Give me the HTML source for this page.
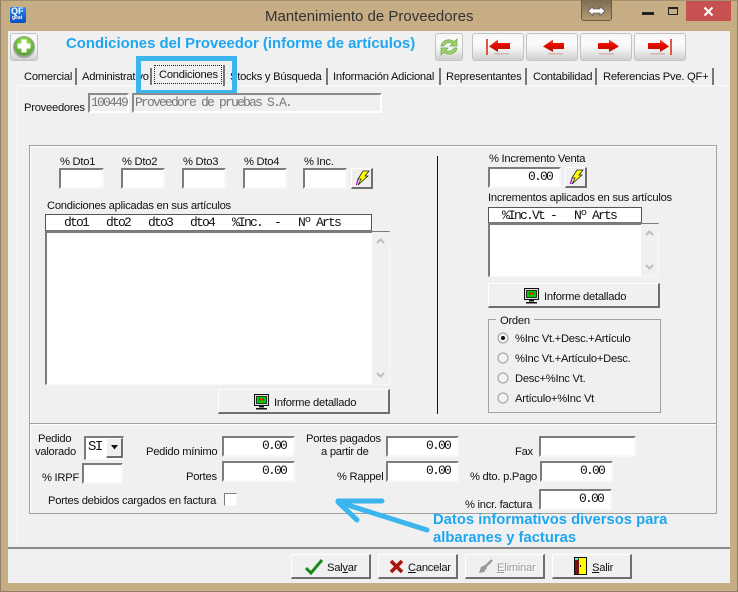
<!DOCTYPE html>
<html><head><meta charset="utf-8"><style>
html,body{margin:0;padding:0}
body{width:738px;height:592px;overflow:hidden;position:relative;background:#c7ad84;font-family:"Liberation Sans",sans-serif;font-size:11.2px;letter-spacing:-.25px;color:#111}
div,span.a,svg{position:absolute}
.t{position:absolute;white-space:pre;line-height:14px;height:14px;margin-top:1px}
.m{position:absolute;white-space:pre;font-family:"Liberation Mono",monospace;font-size:13px;letter-spacing:-1.8px;line-height:14px;height:14px;color:#111}
.in{position:absolute;box-sizing:border-box;background:#fff;border:2px solid;border-color:#7c7c7c #f8f8f8 #f8f8f8 #7c7c7c}
.in .m{right:6px;top:1px}
.g{box-sizing:border-box;border:1px solid #a0a0a0;box-shadow:inset 1px 1px 0 #fff}
.b{box-sizing:border-box;background:#f0f0f0;border:1px solid;border-color:#fff #6e6e6e #6e6e6e #fff;border-width:1px 2px 2px 1px}
.tb{box-sizing:border-box;border:1px solid #c4c4c4;border-radius:3px;background:linear-gradient(#f6f6f6 0,#fbfbfb 35%,#f0f0f0 60%,#cfcfcf 100%)}
.tab{position:absolute;top:68px;height:17px;border-right:2px solid #777;box-sizing:border-box}
u{text-decoration:underline}
.h{letter-spacing:0;font-weight:bold;line-height:17px;height:17px;color:#1ea7f0}
</style></head><body>
<div style="left:0;top:0;width:738px;height:592px;box-sizing:border-box;border:1px solid #8f7f66;border-top-color:#a2906f"></div>
<!-- app icon -->
<div style="left:10px;top:7px;width:16px;height:16px;border-radius:2px;background:linear-gradient(#2c86ee,#0a4fc0)"></div>
<span class="t" style="left:11px;top:5px;font:bold 9px/11px 'Liberation Sans';letter-spacing:0;color:#fff">QF</span>
<span class="t" style="left:12px;top:14px;font:bold 5px/7px 'Liberation Sans';letter-spacing:0;color:#fff">geat</span>
<span class="t" style="left:265px;top:7px;font-size:15px;letter-spacing:0;line-height:18px;height:18px;color:#333">Mantenimiento de Proveedores</span>
<!-- window controls -->
<div style="left:581px;top:-2px;width:31px;height:23px;box-sizing:border-box;border:1px solid #6b5a42;border-radius:3px;background:linear-gradient(#7a6a50,#b49b75)"></div>
<svg style="left:587px;top:5px" width="19" height="12" viewBox="0 0 19 12"><path d="M1 6 6 1.500V4H13V1.500L18 6 13 10.500V8H6V10.500Z" fill="#fff" stroke="#444" stroke-width=".6"/></svg>
<div style="left:642px;top:12px;width:12px;height:3px;background:#222"></div>
<div style="left:668px;top:7px;width:10px;height:8px;box-sizing:border-box;border:1px solid #222;border-top-width:2px"></div>
<div style="left:686px;top:1px;width:45px;height:20px;background:#c75050"></div>
<svg style="left:703px;top:6px" width="11" height="11" viewBox="0 0 11 11"><path d="M1.500 1.500 9.500 9.500M9.500 1.500 1.500 9.500" stroke="#fff" stroke-width="2"/></svg>
<!-- client -->
<div style="left:8px;top:31px;width:722px;height:552px;background:#f0f0f0"></div>
<div style="left:17px;top:85px;width:713px;height:1px;background:#fafafa"></div>
<div style="left:17px;top:85px;width:1px;height:461px;background:#fafafa"></div>
<div style="left:8px;top:547px;width:722px;height:2px;background:#8a8a8a"></div>
<!-- toolbar -->
<div class="tb" style="left:10px;top:33px;width:28px;height:28px"></div>
<svg style="left:12px;top:35px" width="24" height="24" viewBox="0 0 24 24"><defs><radialGradient id="gp" cx=".5" cy=".35" r=".7"><stop offset="0" stop-color="#b6e86a"/><stop offset="1" stop-color="#3f9a20"/></radialGradient></defs><circle cx="12" cy="12" r="11" fill="#9aa596"/><circle cx="12" cy="11" r="9.500" fill="url(#gp)"/><path d="M9.500 4.500H14.500V8.500H18.500V13.500H14.500V17.500H9.500V13.500H5.500V8.500H9.500Z" fill="#fff"/></svg>
<span class="t h" style="left:66px;top:35px;font-size:14.9px">Condiciones del Proveedor (informe de artículos)</span>
<div class="tb" style="left:435px;top:33px;width:28px;height:28px"></div>
<svg style="left:437px;top:35px" width="24" height="24" viewBox="0 0 24 24"><path d="M4 11C5 5 12 3 17.500 6.500L20 4V11H13L15.500 8.500C12 7 8 8 7 11Z" fill="#9ed06e" stroke="#6fa84a" stroke-width=".7"/><path d="M20 13C19 19 12 21 6.500 17.500L4 20V13H11L8.500 15.500C12 17 16 16 17 13Z" fill="#9ed06e" stroke="#6fa84a" stroke-width=".7"/></svg>
<div class="tb" style="left:472px;top:33px;width:52px;height:28px"></div>
<div class="tb" style="left:526px;top:33px;width:52px;height:28px"></div>
<div class="tb" style="left:580px;top:33px;width:52px;height:28px"></div>
<div class="tb" style="left:634px;top:33px;width:52px;height:28px"></div>
<svg style="left:472px;top:33px" width="214" height="28" viewBox="0 0 214 28">
<defs><linearGradient id="ar" x1="0" y1="0" x2="0" y2="1"><stop offset="0" stop-color="#e86040"/><stop offset=".35" stop-color="#ee0a00"/><stop offset="1" stop-color="#b01000"/></linearGradient></defs>
<g fill="url(#ar)">
<rect x="14" y="6" width="2" height="16" fill="#d85a40"/><path d="M17 13.500 26 6.500V10H38V16H26V19Z"/>
<path d="M71 13.500 81 6.500V10H92V16H81V19Z"/>
<path d="M147 13.500 137 6.500V10H126V16H137V19Z"/>
<rect x="198" y="6" width="2" height="16" fill="#d85a40"/><path d="M197 13.500 188 6.500V10H176V16H188V19Z"/>
</g>
<g fill="#c09088" opacity=".55"><rect x="22" y="20" width="15" height="1.500"/><rect x="76" y="20" width="15" height="1.500"/><rect x="127" y="20" width="15" height="1.500"/><rect x="178" y="20" width="15" height="1.500"/></g>
</svg>
<!-- tabs -->
<div class="tab" style="left:19px;width:58px"></div>
<div class="tab" style="left:78px;width:74px"></div>
<div class="tab" style="left:225px;width:103px"></div>
<div class="tab" style="left:329px;width:112px"></div>
<div class="tab" style="left:442px;width:85px"></div>
<div class="tab" style="left:528px;width:69px"></div>
<div class="tab" style="left:598px;width:116px"></div>
<span class="t" style="left:24px;top:69px">Comercial</span>
<span class="t" style="left:82px;top:69px">Administrativo</span>
<span class="t" style="left:230px;top:69px">Stocks y Búsqueda</span>
<span class="t" style="left:333px;top:69px">Información Adicional</span>
<span class="t" style="left:446px;top:69px">Representantes</span>
<span class="t" style="left:533px;top:69px">Contabilidad</span>
<span class="t" style="left:603px;top:69px">Referencias Pve. QF+</span>
<div style="left:153px;top:65px;width:72px;height:21px;background:#f0f0f0;border-right:2px solid #777;box-sizing:border-box"></div>
<div style="left:154px;top:65px;width:68px;height:19px;box-sizing:border-box;border:1px dotted #222"></div>
<span class="t" style="left:159px;top:67px">Condiciones</span>
<!-- blue highlight -->
<div style="left:136px;top:56px;width:101px;height:38px;box-sizing:border-box;border:solid #3bb5ee;border-width:5px 5px 4px 5px"></div>
<!-- proveedores -->
<span class="t" style="left:24px;top:100px">Proveedores</span>
<div class="in" style="left:88px;top:93px;width:41px;height:20px;background:#f0f0f0;border-color:#8a8a8a #fff #fff #8a8a8a"><span class="m" style="left:1px;right:auto;top:1px;color:#777;overflow:hidden;width:37px">100449</span></div>
<div class="in" style="left:132px;top:93px;width:250px;height:20px;background:#f0f0f0;border-color:#8a8a8a #fff #fff #8a8a8a"><span class="m" style="left:1px;right:auto;top:1px;color:#777">Proveedore de pruebas S.A.</span></div>
<!-- groups -->
<div class="g" style="left:29px;top:145px;width:688px;height:279px"></div>
<div class="g" style="left:29px;top:423px;width:688px;height:91px"></div>
<div style="left:437px;top:156px;width:1px;height:258px;background:#111"></div>
<!-- dto row -->
<span class="t" style="left:60px;top:154px">% Dto1</span>
<span class="t" style="left:122px;top:154px">% Dto2</span>
<span class="t" style="left:183px;top:154px">% Dto3</span>
<span class="t" style="left:244px;top:154px">% Dto4</span>
<span class="t" style="left:304px;top:154px">% Inc.</span>
<div class="in" style="left:59px;top:168px;width:45px;height:21px"></div>
<div class="in" style="left:121px;top:168px;width:44px;height:21px"></div>
<div class="in" style="left:182px;top:168px;width:44px;height:21px"></div>
<div class="in" style="left:243px;top:168px;width:44px;height:21px"></div>
<div class="in" style="left:303px;top:168px;width:44px;height:21px"></div>
<div class="b" style="left:351px;top:168px;width:22px;height:21px"></div>
<svg style="left:354px;top:170px" width="16" height="17" viewBox="0 0 16 17"><path d="M9 1H15L11 6H14L4 15 7 9H4Z" fill="#ff0" stroke="#222" stroke-width=".8"/><path d="M2.500 15 4 9" stroke="#c000c0" stroke-width="1.200"/></svg>
<span class="t" style="left:47px;top:198px">Condiciones aplicadas en sus artículos</span>
<div style="left:45px;top:214px;width:327px;height:18px;box-sizing:border-box;border:1px solid #555;border-bottom:2px solid #777;background:#fff"></div>
<span class="m" style="left:64px;top:216px">dto1   dto2   dto3   dto4   %Inc.  -   Nº Arts</span>
<div class="in" style="left:45px;top:231px;width:345px;height:154px;border-width:2px 1px 1px 2px"></div>
<div style="left:372px;top:232px;width:17px;height:152px;background:#f0f0f0"></div>
<svg style="left:372px;top:232px" width="17" height="152" viewBox="0 0 17 152"><path d="M5 11 8.500 7.500 12 11M5 141 8.500 144.500 12 141" fill="none" stroke="#bcbcbc" stroke-width="2"/></svg>
<div class="b" style="left:218px;top:389px;width:172px;height:25px"></div>
<svg style="left:253px;top:394px" width="17" height="16" viewBox="0 0 17 16"><rect x="1.500" y=".500" width="14" height="11" fill="#ddd" stroke="#111"/><rect x="3.500" y="2.500" width="10" height="7" fill="#0c0" stroke="#111" stroke-width=".8"/><rect x="6" y="4.500" width="2" height="2" fill="#e00"/><rect x="9" y="4.500" width="2" height="2" fill="#e00"/><rect x="6" y="12" width="5" height="1.500" fill="#111"/><rect x="3" y="14" width="11" height="1.500" fill="#111"/></svg>
<span class="t" style="left:274px;top:395px">Informe detallado</span>
<!-- right side -->
<span class="t" style="left:489px;top:151px">% Incremento Venta</span>
<div class="in" style="left:488px;top:167px;width:73px;height:21px"><span class="m" style="right:7px">0.00</span></div>
<div class="b" style="left:565px;top:167px;width:22px;height:21px"></div>
<svg style="left:568px;top:169px" width="16" height="17" viewBox="0 0 16 17"><path d="M9 1H15L11 6H14L4 15 7 9H4Z" fill="#ff0" stroke="#222" stroke-width=".8"/><path d="M2.500 15 4 9" stroke="#c000c0" stroke-width="1.200"/></svg>
<span class="t" style="left:488px;top:190px">Incrementos aplicados en sus artículos</span>
<div style="left:488px;top:207px;width:154px;height:17px;box-sizing:border-box;border:1px solid #555;border-bottom:2px solid #777;background:#fff"></div>
<span class="m" style="left:502px;top:209px">%Inc.Vt -   Nº Arts</span>
<div class="in" style="left:488px;top:223px;width:171px;height:54px;border-width:2px 1px 1px 2px"></div>
<div style="left:641px;top:224px;width:17px;height:52px;background:#f0f0f0"></div>
<svg style="left:641px;top:224px" width="17" height="52" viewBox="0 0 17 52"><path d="M5 11 8.500 7.500 12 11M5 41 8.500 44.500 12 41" fill="none" stroke="#bcbcbc" stroke-width="2"/></svg>
<div class="b" style="left:488px;top:283px;width:172px;height:25px"></div>
<svg style="left:523px;top:288px" width="17" height="16" viewBox="0 0 17 16"><rect x="1.500" y=".500" width="14" height="11" fill="#ddd" stroke="#111"/><rect x="3.500" y="2.500" width="10" height="7" fill="#0c0" stroke="#111" stroke-width=".8"/><rect x="6" y="4.500" width="2" height="2" fill="#e00"/><rect x="9" y="4.500" width="2" height="2" fill="#e00"/><rect x="6" y="12" width="5" height="1.500" fill="#111"/><rect x="3" y="14" width="11" height="1.500" fill="#111"/></svg>
<span class="t" style="left:544px;top:289px">Informe detallado</span>
<div style="left:488px;top:319px;width:173px;height:94px;box-sizing:border-box;border:1px solid #a0a0a0"></div>
<span class="t" style="left:496px;top:313px;background:#f0f0f0;padding:0 4px">Orden</span>
<svg style="left:496px;top:331px" width="14" height="76" viewBox="0 0 14 76">
<g fill="#f4f4f4" stroke="#9a9a9a"><circle cx="7" cy="7" r="5"/><circle cx="7" cy="27" r="5"/><circle cx="7" cy="47" r="5"/><circle cx="7" cy="67" r="5"/></g><circle cx="7" cy="7" r="2" fill="#111"/></svg>
<span class="t" style="left:515px;top:331px">%Inc Vt.+Desc.+Artículo</span>
<span class="t" style="left:515px;top:351px">%Inc Vt.+Artículo+Desc.</span>
<span class="t" style="left:515px;top:371px">Desc+%Inc Vt.</span>
<span class="t" style="left:515px;top:391px">Artículo+%Inc Vt</span>
<!-- lower group -->
<span class="t" style="left:38px;top:431px">Pedido</span>
<span class="t" style="left:35px;top:444px">valorado</span>
<div class="in" style="left:84px;top:436px;width:40px;height:24px;border-width:2px 1px 1px 2px"><span class="m" style="left:2px;right:auto;top:2px;letter-spacing:-1.500px;font-size:14px">SI</span></div>
<div class="b" style="left:106px;top:438px;width:17px;height:20px"></div>
<svg style="left:110px;top:445px" width="9" height="5" viewBox="0 0 9 5"><path d="M1 0H8L4.500 4.500Z" fill="#111"/></svg>
<span class="t" style="left:42px;top:470px">% IRPF</span>
<div class="in" style="left:82px;top:463px;width:41px;height:21px"></div>
<span class="t" style="left:146px;top:444px">Pedido mínimo</span>
<div class="in" style="left:222px;top:436px;width:73px;height:21px"><span class="m" style="right:7px">0.00</span></div>
<span class="t" style="left:186px;top:469px">Portes</span>
<div class="in" style="left:222px;top:461px;width:73px;height:21px"><span class="m" style="right:7px">0.00</span></div>
<span class="t" style="left:48px;top:493px">Portes debidos cargados en factura</span>
<div class="in" style="left:224px;top:493px;width:13px;height:13px;border-width:1px"></div>
<span class="t" style="left:306px;top:431px">Portes pagados</span>
<span class="t" style="left:321px;top:444px">a partir de</span>
<div class="in" style="left:386px;top:436px;width:73px;height:21px"><span class="m" style="right:7px">0.00</span></div>
<span class="t" style="left:337px;top:469px">% Rappel</span>
<div class="in" style="left:386px;top:461px;width:73px;height:21px"><span class="m" style="right:7px">0.00</span></div>
<span class="t" style="left:515px;top:444px">Fax</span>
<div class="in" style="left:539px;top:436px;width:97px;height:21px"></div>
<span class="t" style="left:470px;top:469px">% dto. p.Pago</span>
<div class="in" style="left:540px;top:461px;width:73px;height:21px"><span class="m" style="right:7px">0.00</span></div>
<span class="t" style="left:465px;top:497px">% incr. factura</span>
<div class="in" style="left:539px;top:489px;width:73px;height:21px"><span class="m" style="right:7px">0.00</span></div>
<!-- annotation -->
<svg style="left:330px;top:495px" width="105" height="42" viewBox="0 0 105 42"><path d="M97 35 8 7M8 6H52M8 7 27 25" fill="none" stroke="#3bb5ee" stroke-width="5" stroke-linecap="round"/></svg>
<span class="t h" style="left:433px;top:511px;font-size:14.8px">Datos informativos diversos para</span>
<span class="t h" style="left:433px;top:529px;font-size:14.8px">albaranes y facturas</span>
<!-- bottom buttons -->
<div class="b" style="left:291px;top:554px;width:80px;height:25px"></div>
<svg style="left:305px;top:558px" width="18" height="17" viewBox="0 0 18 17"><path d="M1 10 6 15 17 2" fill="none" stroke="#1a8a1a" stroke-width="3"/></svg>
<span class="t" style="left:327px;top:560px">Sal<u>v</u>ar</span>
<div class="b" style="left:378px;top:554px;width:80px;height:25px"></div>
<svg style="left:389px;top:559px" width="15" height="15" viewBox="0 0 15 15"><path d="M2 2 13 13M13 2 2 13" stroke="#a81410" stroke-width="3.600"/></svg>
<span class="t" style="left:408px;top:560px"><u>C</u>ancelar</span>
<div class="b" style="left:465px;top:554px;width:80px;height:25px"></div>
<svg style="left:477px;top:559px" width="16" height="16" viewBox="0 0 16 16"><path d="M15 1 8 8" stroke="#999" stroke-width="2.500"/><path d="M2 14 4 8 8 6 10 9 7 13Z" fill="#999"/></svg>
<span class="t" style="left:497px;top:560px;color:#9a9a9a;text-shadow:1px 1px 0 #fff"><u>E</u>liminar</span>
<div class="b" style="left:552px;top:554px;width:80px;height:25px"></div>
<svg style="left:574px;top:557px" width="13" height="18" viewBox="0 0 13 18"><rect x=".5" y=".5" width="12" height="17" fill="#ff0" stroke="#111"/><path d="M1 2 5 1V17H1Z" fill="#7a1010"/><rect x="1" y="1" width="3" height="2" fill="#3fd"/><rect x="6" y="8" width="1" height="2" fill="#111"/></svg>
<span class="t" style="left:592px;top:560px"><u>S</u>alir</span>
</body></html>
